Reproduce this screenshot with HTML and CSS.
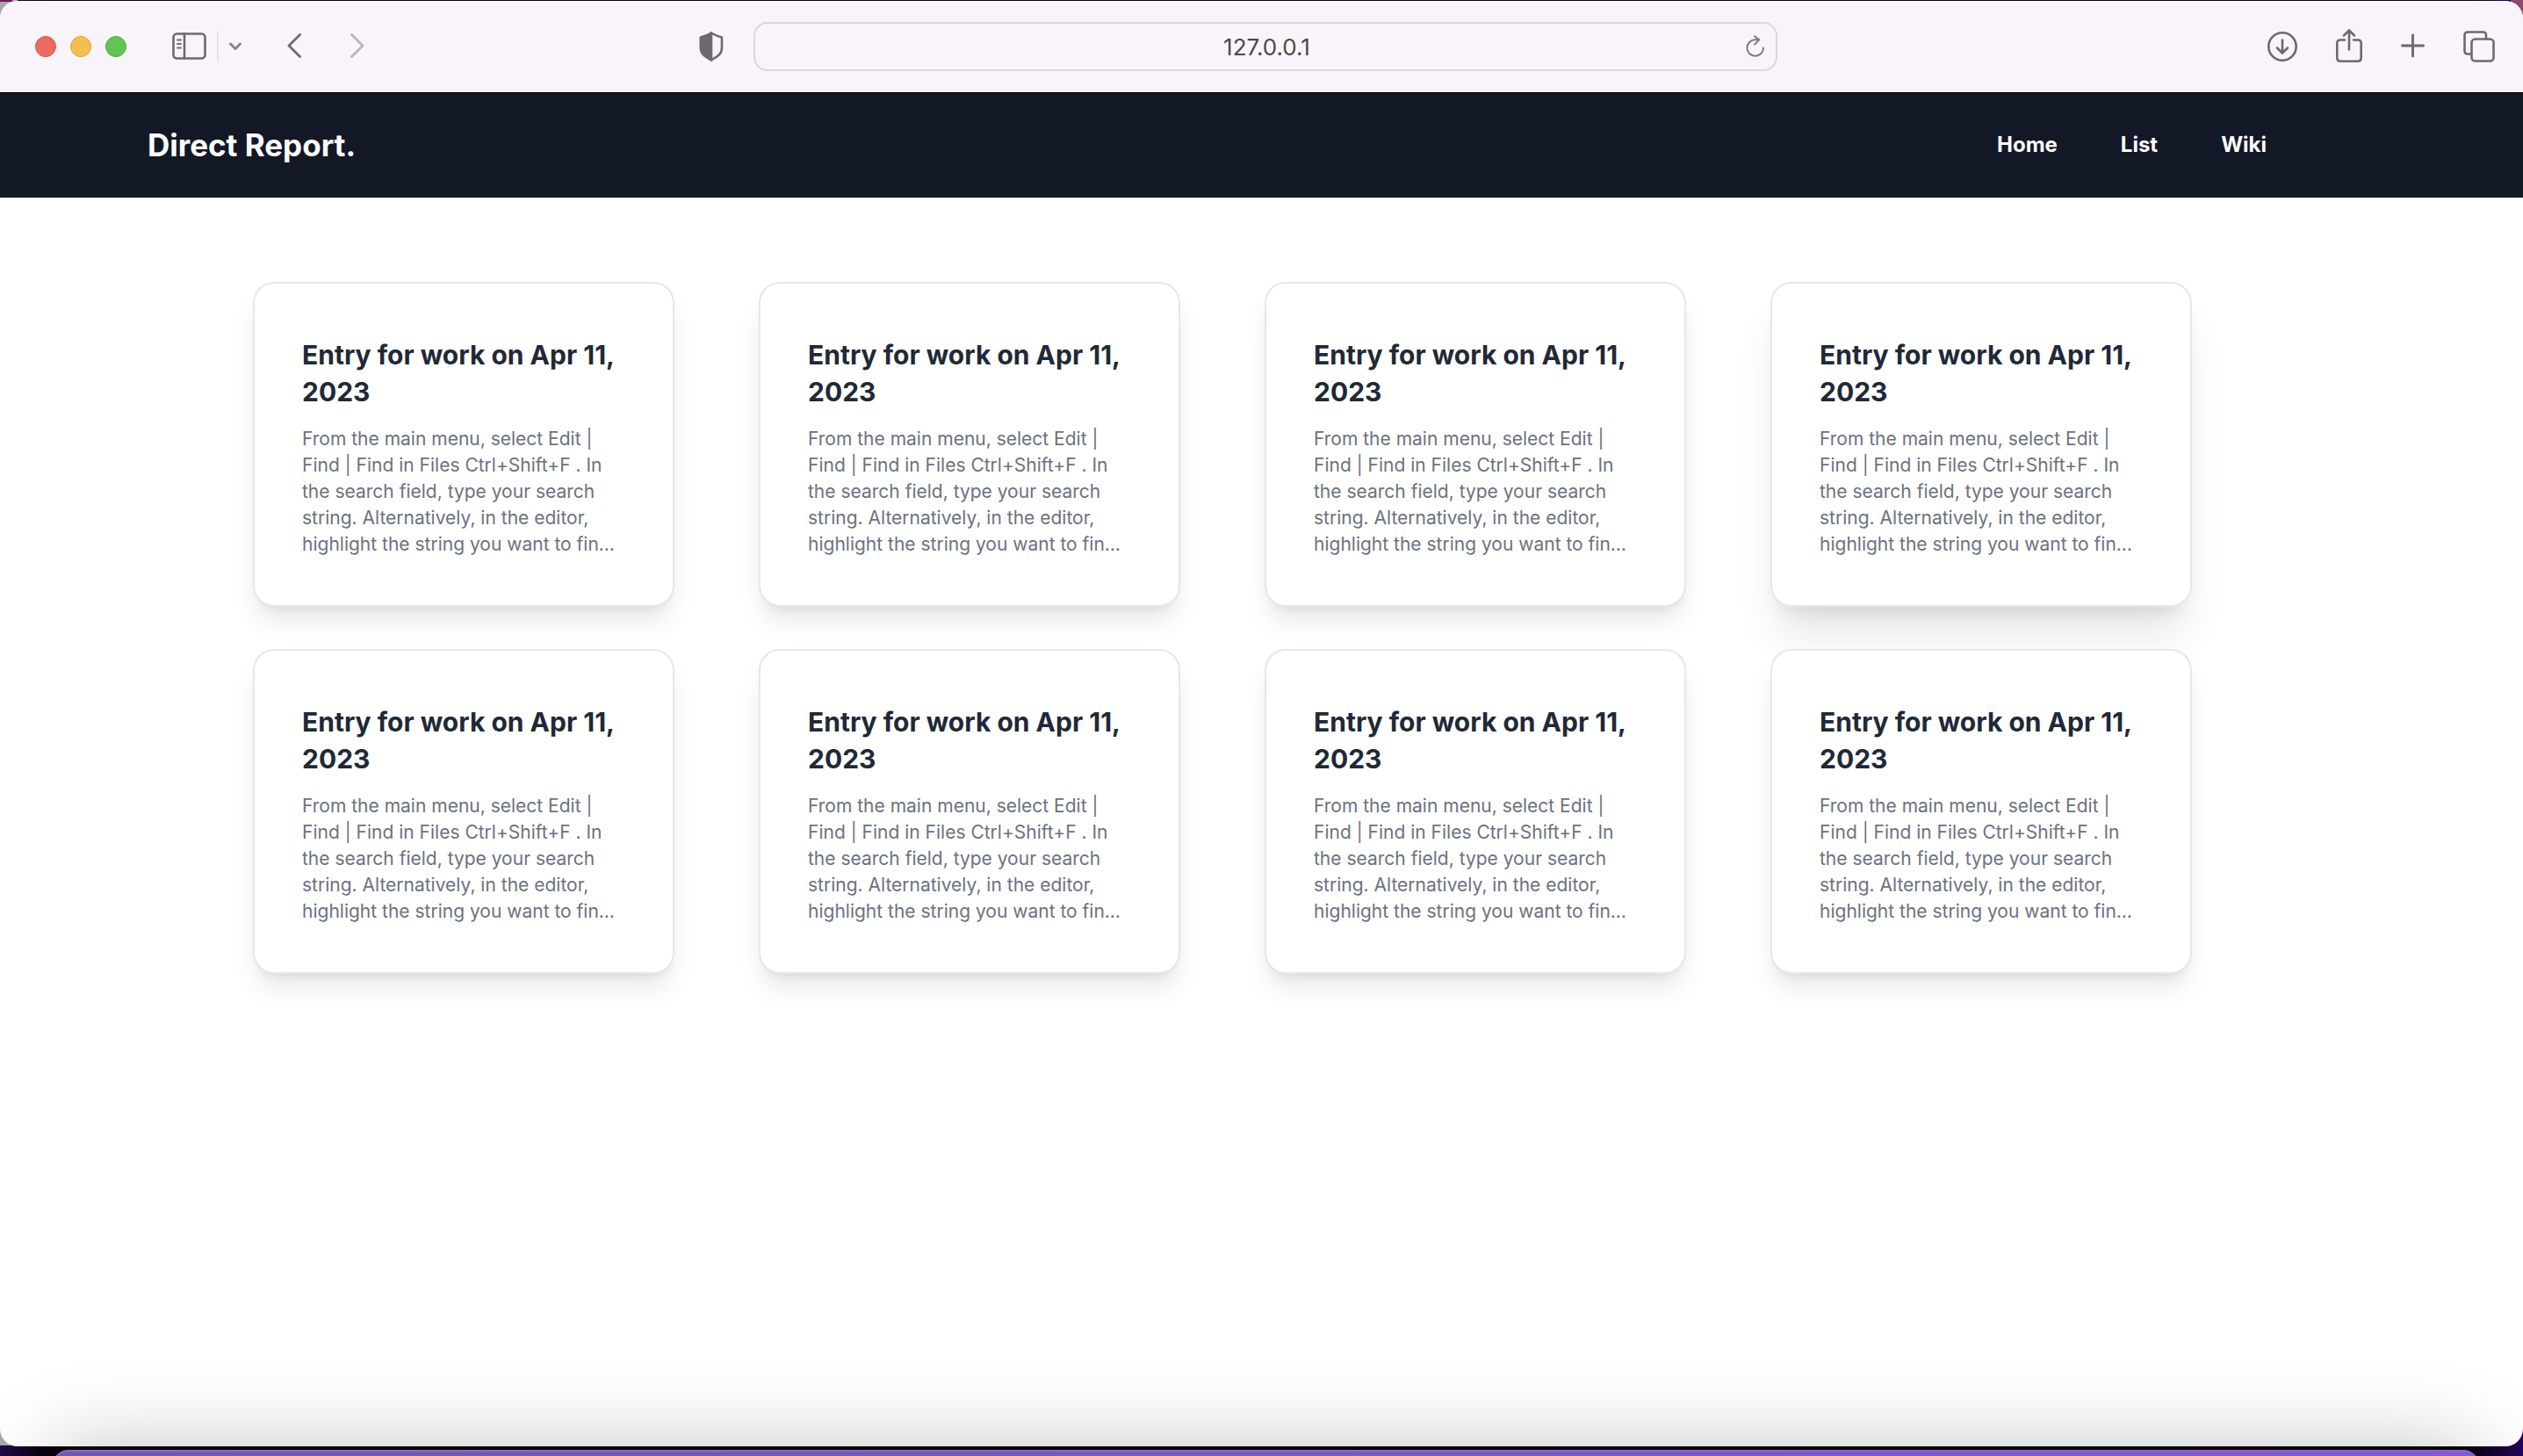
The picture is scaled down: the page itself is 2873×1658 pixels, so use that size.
FILE: index.html
```html
<!DOCTYPE html>
<html lang="en">
<head>
<meta charset="utf-8">
<meta name="viewport" content="width=device-width, initial-scale=1">
<title>Direct Report.</title>
<link rel="stylesheet" href="styles.css">
</head>
<body>
<div class="desktop">
<div class="window">
  <div class="toolbar">
    <div class="toolbar-start">
      <div class="lights">
        <button class="light light-close" aria-label="Close window"></button>
        <button class="light light-minimize" aria-label="Minimize window"></button>
        <button class="light light-zoom" aria-label="Zoom window"></button>
      </div>
      <div class="sidebar-tools">
        <button class="tool" aria-label="Show sidebar">
          <svg width="39" height="32" viewBox="0 0 39 32"><rect x="1.5" y="1.500" width="36" height="28" rx="4"/><path d="M14 1.500v28"/><path d="M6 8.500h4M6 13h4M6 17.500h4" stroke-width="1.800"/></svg>
        </button>
        <span class="divider"></span>
        <button class="tool" aria-label="Tab groups">
          <svg class="soft" width="14" height="10" viewBox="0 0 14 10"><path d="M1.500 2L7 7.500L12.500 2" stroke-width="3"/></svg>
        </button>
      </div>
      <div class="history">
        <button class="tool" aria-label="Back">
          <svg width="16" height="30" viewBox="0 0 16 30"><path d="M14.500 1.500L2 14L14.500 26.500" stroke-width="2.800"/></svg>
        </button>
        <button class="tool tool-disabled" aria-label="Forward" disabled>
          <svg width="16" height="30" viewBox="0 0 16 30"><path d="M1.500 1.500L14 14L1.500 26.500" stroke-width="2.800"/></svg>
        </button>
      </div>
      <button class="tool privacy" aria-label="Privacy report">
        <svg width="28" height="34" viewBox="0 0 28 34"><path d="M14 1.500C17 3.500 21 5 26 6.500V19C26 25.500 20 29 14 32.500C8 29 2 25.500 2 19V6.500C7 5 11 3.500 14 1.500Z"/><path class="solid" d="M14 1.500C11 3.500 7 5 2 6.500V19C2 25.500 8 29 14 32.500Z"/></svg>
      </button>
    </div>
    <div class="address">
      <input class="address-input" type="text" value="127.0.0.1" aria-label="Address">
      <button class="tool" aria-label="Reload">
        <svg class="reload" width="22" height="26" viewBox="0 0 22 26"><path d="M20 14.500A9.300 9.300 0 1 1 10.700 5.200H15"/><path d="M10 1.200L15.200 5.400L10 10.600"/></svg>
      </button>
    </div>
    <div class="toolbar-end">
      <button class="tool" aria-label="Downloads">
        <svg width="34" height="34" viewBox="0 0 34 34"><circle cx="17" cy="17" r="15.700"/><path d="M17 9.500V24M11 18.500L17 24.500L23 18.500"/></svg>
      </button>
      <button class="tool" aria-label="Share">
        <svg width="30" height="40" viewBox="0 0 30 40"><path d="M10 12.500H5Q1.300 12.500 1.300 16V33Q1.300 36.700 5 36.700H25Q28.700 36.700 28.700 33V16Q28.700 12.500 25 12.500H20"/><path d="M15 23.500V2M9 7.500L15 1.500L21 7.500"/></svg>
      </button>
      <button class="tool" aria-label="New tab">
        <svg width="27" height="30" viewBox="0 0 27 30"><path d="M13.500 2V26M1.500 14H25.500" stroke-width="2.900"/></svg>
      </button>
      <button class="tool" aria-label="Tab overview">
        <svg width="36" height="36" viewBox="0 0 36 36"><rect x="9.500" y="9.500" width="25" height="25" rx="4"/><path d="M9 26.500H5Q1.500 26.500 1.500 23V5Q1.500 1.500 5 1.500H22.500Q26 1.500 26 5V9"/></svg>
      </button>
    </div>
  </div>

  <header class="site-header">
    <a class="brand" href="#">Direct Report.</a>
    <nav class="site-nav">
      <a href="#">Home</a>
      <a href="#">List</a>
      <a href="#">Wiki</a>
    </nav>
  </header>

  <main class="entries">
    <article class="entry">
      <h2>Entry for work on Apr 11, 2023</h2>
      <p>From the main menu, select Edit | Find | Find in Files Ctrl+Shift+F . In the search field, type your search string. Alternatively, in the editor, highlight the string you want to fin…</p>
    </article>
    <article class="entry">
      <h2>Entry for work on Apr 11, 2023</h2>
      <p>From the main menu, select Edit | Find | Find in Files Ctrl+Shift+F . In the search field, type your search string. Alternatively, in the editor, highlight the string you want to fin…</p>
    </article>
    <article class="entry">
      <h2>Entry for work on Apr 11, 2023</h2>
      <p>From the main menu, select Edit | Find | Find in Files Ctrl+Shift+F . In the search field, type your search string. Alternatively, in the editor, highlight the string you want to fin…</p>
    </article>
    <article class="entry entry-raised">
      <h2>Entry for work on Apr 11, 2023</h2>
      <p>From the main menu, select Edit | Find | Find in Files Ctrl+Shift+F . In the search field, type your search string. Alternatively, in the editor, highlight the string you want to fin…</p>
    </article>
    <article class="entry">
      <h2>Entry for work on Apr 11, 2023</h2>
      <p>From the main menu, select Edit | Find | Find in Files Ctrl+Shift+F . In the search field, type your search string. Alternatively, in the editor, highlight the string you want to fin…</p>
    </article>
    <article class="entry">
      <h2>Entry for work on Apr 11, 2023</h2>
      <p>From the main menu, select Edit | Find | Find in Files Ctrl+Shift+F . In the search field, type your search string. Alternatively, in the editor, highlight the string you want to fin…</p>
    </article>
    <article class="entry">
      <h2>Entry for work on Apr 11, 2023</h2>
      <p>From the main menu, select Edit | Find | Find in Files Ctrl+Shift+F . In the search field, type your search string. Alternatively, in the editor, highlight the string you want to fin…</p>
    </article>
    <article class="entry">
      <h2>Entry for work on Apr 11, 2023</h2>
      <p>From the main menu, select Edit | Find | Find in Files Ctrl+Shift+F . In the search field, type your search string. Alternatively, in the editor, highlight the string you want to fin…</p>
    </article>
  </main>
</div>
<div class="dock-edge"><div class="dock"></div></div>
</div>
</body>
</html>
```
FILE: styles.css
```css
* {
  box-sizing: border-box;
}

body {
  margin: 0;
  font-family: Inter, "Liberation Sans", sans-serif;
}

button {
  margin: 0;
  padding: 0;
  border: 0;
  background: none;
}

a {
  color: inherit;
  text-decoration: none;
}

.desktop {
  display: flex;
  flex-direction: column;
  gap: 4px;
  height: 100vh;
  padding-top: 1px;
  overflow: hidden;
  background:
    linear-gradient(#6d1a6b, #6d1a6b) 0 0 / 14px 2px no-repeat,
    linear-gradient(#a9a7aa, #a9a7aa) 0 0 / 20px calc(100% - 12px) no-repeat,
    linear-gradient(#8b4a70, #8b4a70) 100% 0 / 14px 20px no-repeat,
    linear-gradient(90deg, #1d0a4a 0, #08020f 50px, #08020f calc(100% - 60px), #23045c 100%);
}

.window {
  flex: 1;
  min-height: 0;
  overflow: hidden;
  border-radius: 20px;
  background: #fff;
}

/* Browser toolbar */

.toolbar {
  display: grid;
  grid-template-columns: 1fr minmax(300px, 1166px) 1fr;
  align-items: center;
  height: 105px;
  padding: 0 32px 0 40px;
  border-bottom: 1px solid #000;
  background: #f8f4fa;
}

.toolbar-start,
.toolbar-end,
.lights,
.sidebar-tools,
.history {
  display: flex;
  align-items: center;
}

.toolbar-start {
  gap: 52px;
}

.toolbar-end {
  justify-content: flex-end;
  gap: 44px;
}

.lights {
  gap: 16px;
}

.light {
  width: 24px;
  height: 24px;
  border: 1px solid;
  border-radius: 50%;
}

.light-close {
  border-color: #d9564b;
  background: #ec6a5e;
}

.light-minimize {
  border-color: #d9a23c;
  background: #f4bf4f;
}

.light-zoom {
  border-color: #50a93d;
  background: #61c554;
}

.sidebar-tools {
  gap: 12px;
}

.divider {
  width: 2px;
  height: 36px;
  background: #e7e2e9;
}

.history {
  gap: 56px;
}

.privacy {
  margin-left: auto;
  margin-right: 34px;
}

.tool svg {
  display: block;
  fill: none;
  stroke: #6e686f;
  stroke-width: 2.6;
  stroke-linecap: round;
  stroke-linejoin: round;
}

.tool .solid {
  fill: #6e686f;
}

.tool .soft {
  stroke: #8b868d;
}

.tool .reload {
  stroke: #7d7a7e;
  stroke-width: 2;
}

.tool-disabled {
  opacity: 0.45;
}

.address {
  display: flex;
  align-items: center;
  height: 56px;
  padding-right: 12px;
  border: 2px solid #dad6dc;
  border-radius: 16px;
}

.address-input {
  flex: 1;
  min-width: 0;
  padding: 0 0 0 38px;
  border: 0;
  outline: 0;
  background: none;
  color: #4b474c;
  font: 400 26px Inter, "Liberation Sans", sans-serif;
  text-align: center;
}

/* Site header */

.site-header {
  display: flex;
  align-items: center;
  justify-content: space-between;
  height: 119px;
  padding: 0 292px 2px 168px;
  background: #121826;
  color: #fff;
}

.brand {
  font-size: 35px;
  font-weight: 700;
}

.site-nav {
  display: flex;
  gap: 72px;
  font-size: 24px;
  font-weight: 700;
}

/* Entry cards */

.entries {
  display: grid;
  grid-template-columns: repeat(4, 1fr);
  gap: 48px 96px;
  padding: 96px 377px 96px 288px;
}

.entry {
  padding: 60px 52px 54px 54px;
  border: 2px solid #e5e7eb;
  border-radius: 24px;
  background: #fff;
  box-shadow: 0 20px 30px -6px rgba(0, 0, 0, 0.1), 0 8px 12px -8px rgba(0, 0, 0, 0.1);
}

.entry-raised {
  box-shadow: 0 40px 50px -10px rgba(0, 0, 0, 0.1), 0 16px 20px -12px rgba(0, 0, 0, 0.1);
}

.entry h2 {
  margin: 0 0 18px;
  color: #1f2937;
  font-size: 30px;
  font-weight: 700;
  line-height: 42px;
}

.entry p {
  margin: 0;
  color: #6b7280;
  font-size: 21px;
  line-height: 30px;
}

/* Top edge of the dock, with the shade it casts over the window */

.dock-edge {
  position: relative;
  flex: none;
  height: 7px;
  padding: 0 50px 0 60px;
}

.dock {
  height: 300px;
  border-top: 2px solid #8a6cc4;
  border-radius: 18px;
  background: linear-gradient(90deg, #7058ab, #8458d6);
  box-shadow: 0 0 96px rgba(0, 0, 0, 0.25);
}
```
